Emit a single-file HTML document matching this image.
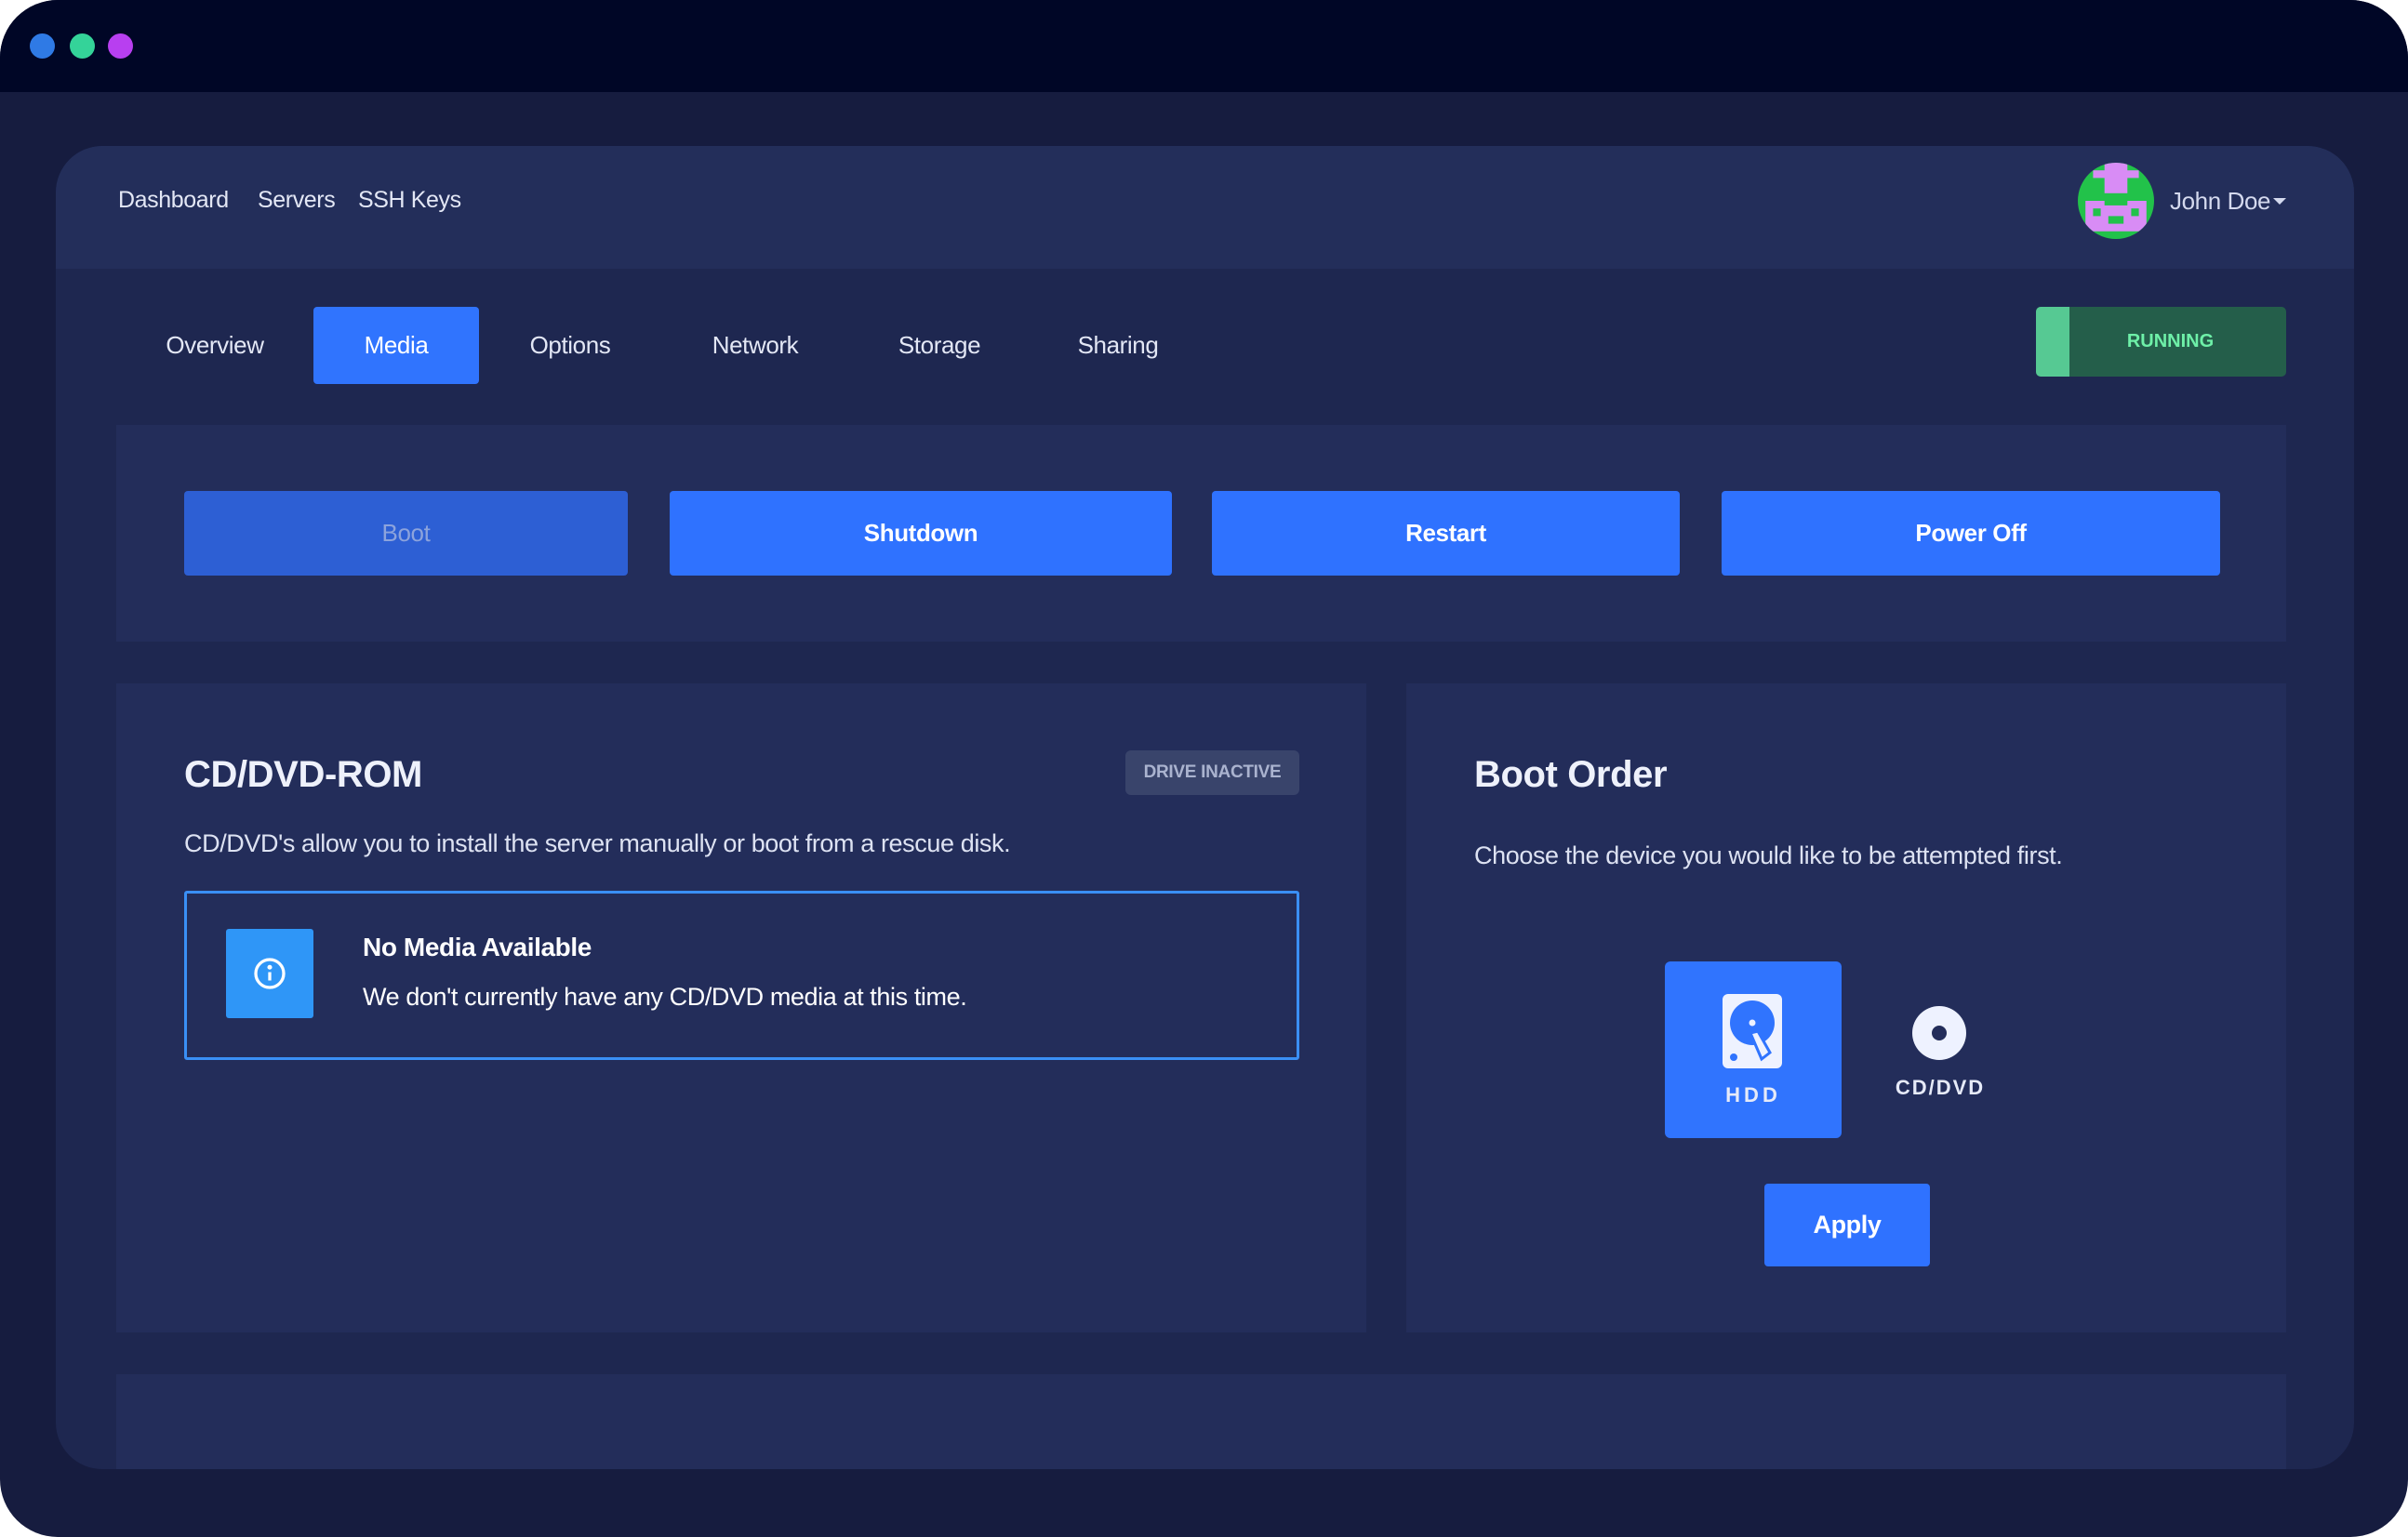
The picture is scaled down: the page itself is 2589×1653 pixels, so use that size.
<!DOCTYPE html>
<html><head><meta charset="utf-8"><style>
*{margin:0;padding:0;box-sizing:border-box}
body{width:2589px;height:1653px;background:#fff;font-family:"Liberation Sans",sans-serif;overflow:hidden;position:relative}
.a{position:absolute}
.frame{left:0;top:0;width:2589px;height:1653px;background:#161c3f;border-radius:62px;overflow:hidden}
.bar{left:0;top:0;width:2589px;height:99px;background:#000626}
.dot{width:27px;height:27px;border-radius:50%;top:36px}
.card{left:60px;top:157px;width:2471px;height:1423px;background:#1e2750;border-radius:50px;overflow:hidden}
.hdr{left:0;top:0;width:2471px;height:132px;background:#232e5a}
.t{color:#e3e7f5;font-size:26px;line-height:1;white-space:nowrap;letter-spacing:-0.4px}
.panel{background:#232d5a}
.btn{background:#2f72ff;color:#fff;font-weight:bold;font-size:26px;display:flex;align-items:center;justify-content:center;border-radius:4px;letter-spacing:-0.4px}
.c{transform:translateX(-50%)}
</style></head><body>
<div class="a frame">
 <div class="a bar"></div>
 <div class="a dot" style="left:32px;background:#2f7ae5"></div>
 <div class="a dot" style="left:75px;background:#34d399"></div>
 <div class="a dot" style="left:116px;background:#b83ff0"></div>

 <div class="a card">
  <div class="a hdr"></div>
  <div class="a t" style="left:67px;top:46px;font-size:25px">Dashboard</div>
  <div class="a t" style="left:217px;top:46px;font-size:25px">Servers</div>
  <div class="a t" style="left:325px;top:46px;font-size:25px">SSH Keys</div>
  <svg class="a" style="left:2174px;top:18px" width="82" height="82" viewBox="0 0 10 10">
   <defs><clipPath id="cc"><circle cx="5" cy="5" r="5"/></clipPath></defs>
   <g clip-path="url(#cc)">
    <rect width="10" height="10" fill="#22c24a"/>
    <g fill="#d88cf5">
     <rect x="2" y="1" width="6" height="1"/><rect x="3.5" y="0" width="3" height="4"/>
     <rect x="1" y="5" width="8" height="4"/>
    </g>
    <g fill="#22c24a">
     <rect x="2" y="6" width="1" height="1"/><rect x="7" y="6" width="1" height="1"/>
     <rect x="4" y="7" width="2" height="1"/><rect x="3.5" y="5" width="3" height="0.6"/>
    </g>
   </g>
  </svg>
  <div class="a t" style="left:2273px;top:46px;color:#d4d9ee">John Doe</div>
  <div class="a" style="left:2384px;top:56px;width:0;height:0;border-left:7px solid transparent;border-right:7px solid transparent;border-top:7px solid #d4d9ee"></div>

  <div class="a" style="left:277px;top:173px;width:178px;height:83px;background:#3074fe;border-radius:4px"></div>
  <div class="a t c" style="left:171px;top:201px;font-size:26px">Overview</div>
  <div class="a t c" style="left:366px;top:201px;font-size:26px;color:#fff">Media</div>
  <div class="a t c" style="left:553px;top:201px;font-size:26px">Options</div>
  <div class="a t c" style="left:752px;top:201px;font-size:26px">Network</div>
  <div class="a t c" style="left:950px;top:201px;font-size:26px">Storage</div>
  <div class="a t c" style="left:1142px;top:201px;font-size:26px">Sharing</div>

  <div class="a" style="left:2129px;top:173px;width:269px;height:75px;background:#245e4a;border-radius:5px;overflow:hidden">
   <div class="a" style="left:0;top:0;width:36px;height:75px;background:#56c993"></div>
   <div class="a" style="left:20px;top:0;width:249px;height:75px;display:flex;align-items:center;justify-content:center;color:#6ef0a8;font-weight:bold;font-size:20px">RUNNING</div>
  </div>

  <div class="a panel" style="left:65px;top:300px;width:2333px;height:233px"></div>
  <div class="a btn" style="left:138px;top:371px;width:477px;height:91px;background:#2d5fd4;color:#8ca3dc;font-weight:normal">Boot</div>
  <div class="a btn" style="left:660px;top:371px;width:540px;height:91px">Shutdown</div>
  <div class="a btn" style="left:1243px;top:371px;width:503px;height:91px">Restart</div>
  <div class="a btn" style="left:1791px;top:371px;width:536px;height:91px">Power Off</div>

  <div class="a panel" style="left:65px;top:578px;width:1344px;height:698px"></div>
  <div class="a t" style="left:138px;top:656px;font-size:40px;font-weight:bold;color:#eef1fb">CD/DVD-ROM</div>
  <div class="a" style="left:1150px;top:650px;width:187px;height:48px;background:#39446b;border-radius:6px;display:flex;align-items:center;justify-content:center;color:#aab3cf;font-weight:bold;font-size:19px;letter-spacing:-0.3px">DRIVE INACTIVE</div>
  <div class="a t" style="left:138px;top:737px;font-size:27px;color:#dde2f2">CD/DVD's allow you to install the server manually or boot from a rescue disk.</div>
  <div class="a" style="left:138px;top:801px;width:1199px;height:182px;border:3px solid #3a8ff5;border-radius:3px"></div>
  <div class="a" style="left:183px;top:842px;width:94px;height:96px;background:#2f96f7;border-radius:3px"></div>
  <svg class="a" style="left:212px;top:872px" width="36" height="36" viewBox="0 0 24 24" fill="none" stroke="#fff" stroke-width="2.2"><circle cx="12" cy="12" r="10"/><line x1="12" y1="11" x2="12" y2="17"/><circle cx="12" cy="7.5" r="0.6" fill="#fff"/></svg>
  <div class="a t" style="left:330px;top:848px;font-size:28px;font-weight:bold;color:#fff">No Media Available</div>
  <div class="a t" style="left:330px;top:902px;font-size:27px;color:#fff">We don't currently have any CD/DVD media at this time.</div>

  <div class="a panel" style="left:1452px;top:578px;width:946px;height:698px"></div>
  <div class="a t" style="left:1525px;top:656px;font-size:40px;font-weight:bold;color:#eef1fb">Boot Order</div>
  <div class="a t" style="left:1525px;top:750px;font-size:27px;color:#dde2f2">Choose the device you would like to be attempted first.</div>
  <div class="a" style="left:1730px;top:877px;width:190px;height:190px;background:#3074fe;border-radius:6px"></div>
  <svg class="a" style="left:1792px;top:912px" width="64" height="80" viewBox="0 0 64 80">
   <rect x="0" y="0" width="64" height="80" rx="6" fill="#eef2ff"/>
   <circle cx="32" cy="31" r="24" fill="#3074fe"/>
   <circle cx="32" cy="31" r="3.5" fill="#eef2ff"/>
   <path d="M30 42 L38 40 L51 63 L42 70 Z" fill="#eef2ff" stroke="#3074fe" stroke-width="3"/>
   <circle cx="12" cy="68" r="4" fill="#3074fe"/>
  </svg>
  <div class="a t c" style="left:1825px;top:1010px;font-size:22px;font-weight:bold;letter-spacing:4px;color:#e6eaf8">HDD</div>
  <svg class="a" style="left:1996px;top:925px" width="58" height="58" viewBox="0 0 58 58"><circle cx="29" cy="29" r="29" fill="#eef2ff"/><circle cx="29" cy="29" r="8" fill="#232d5a"/></svg>
  <div class="a t c" style="left:2026px;top:1002px;font-size:22px;font-weight:bold;letter-spacing:2px;color:#e6eaf8">CD/DVD</div>
  <div class="a btn" style="left:1837px;top:1116px;width:178px;height:89px;font-size:27px">Apply</div>

  <div class="a panel" style="left:65px;top:1321px;width:2333px;height:200px"></div>
 </div>
</div>
</body></html>
